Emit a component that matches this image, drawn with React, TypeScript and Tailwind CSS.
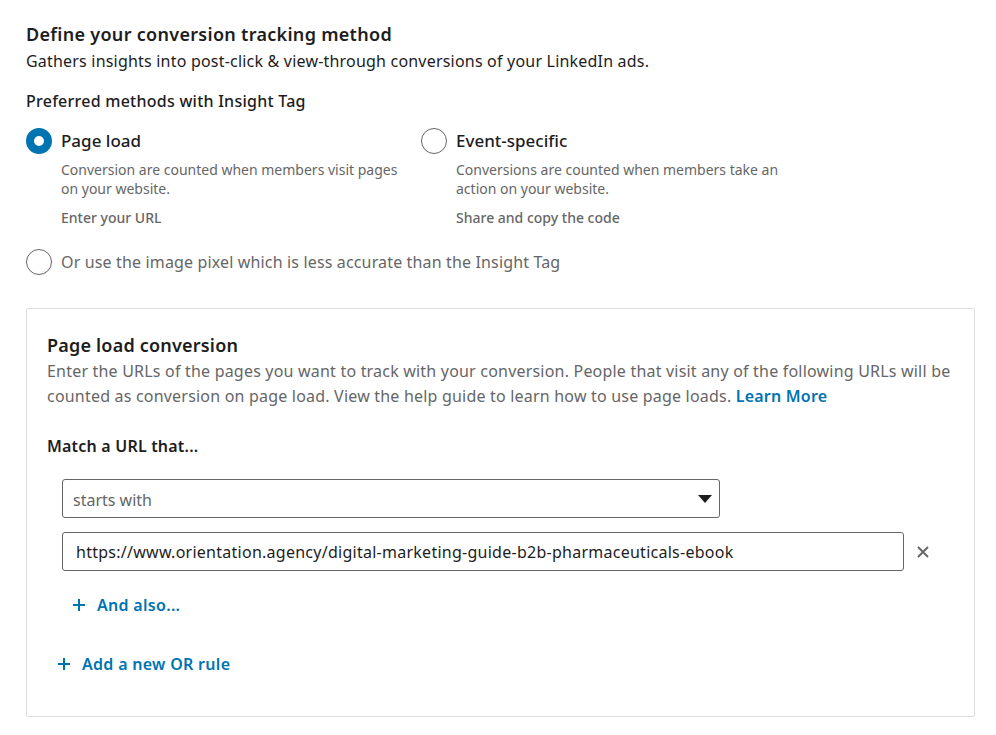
import React from "react";

function Radio({ checked }: { checked?: boolean }) {
  return checked ? (
    <span className="block w-[26px] h-[26px] rounded-full border-[8px] border-[#0073b1] bg-white shrink-0" />
  ) : (
    <span className="block w-[26px] h-[26px] rounded-full border-[1.5px] border-[#666666] bg-white shrink-0" />
  );
}

function Plus() {
  return (
    <svg width="14" height="14" viewBox="0 0 14 14" className="shrink-0">
      <path d="M7 1v12M1 7h12" stroke="#0073b1" strokeWidth="2" />
    </svg>
  );
}

export default function App() {
  return (
    <div
      className="bg-white w-[996px] h-[735px] overflow-hidden text-[rgba(0,0,0,0.9)] pl-[26px] pr-[21px] pt-[22px]"
      style={{ fontFamily: '"Noto Sans", "Open Sans", sans-serif' }}
    >
      <h1 className="text-[18px] leading-[24px] font-semibold text-[#1d1d1d] tracking-[0.3px]">Define your conversion tracking method</h1>
      <p className="text-[16px] leading-[22px] text-[#1d1d1d] mt-[4px] tracking-[0.2px]">
        Gathers insights into post-click &amp; view-through conversions of your LinkedIn ads.
      </p>
      <h2 className="text-[16px] leading-[22px] font-medium text-[#1d1d1d] mt-[18px] tracking-[0.25px]">Preferred methods with Insight Tag</h2>

      <div className="flex mt-[16px]">
        <div className="w-[395px] flex gap-[9px]">
          <Radio checked />
          <div>
            <div className="text-[17px] leading-[26px] font-medium text-[#1d1d1d]">Page load</div>
            <p className="text-[14px] leading-[19px] text-[#666666] mt-[6px] w-[345px]">
              Conversion are counted when members visit pages on your website.
            </p>
            <div className="text-[14px] leading-[20px] font-medium text-[#666666] mt-[10px]">Enter your URL</div>
          </div>
        </div>
        <div className="flex gap-[9px]">
          <Radio />
          <div>
            <div className="text-[17px] leading-[26px] font-medium text-[#1d1d1d]">Event-specific</div>
            <p className="text-[14px] leading-[19px] text-[#666666] mt-[6px] w-[345px]">
              Conversions are counted when members take an action on your website.
            </p>
            <div className="text-[14px] leading-[20px] font-medium text-[#666666] mt-[10px]">Share and copy the code</div>
          </div>
        </div>
      </div>

      <div className="flex items-center gap-[9px] mt-[21px]">
        <Radio />
        <span className="text-[16px] leading-[26px] text-[#666666] tracking-[0.15px]">Or use the image pixel which is less accurate than the Insight Tag</span>
      </div>

      <div className="mt-[33px] border border-[#dddddd] rounded-[2px] h-[409px] pl-[20px] pr-[12px] pt-[23px]">
        <h3 className="text-[18px] leading-[26px] font-semibold text-[#1d1d1d] tracking-[0.2px]">Page load conversion</h3>
        <p className="text-[16px] leading-[25px] text-[#666666] mt-[1px] tracking-[0.2px]">
          Enter the URLs of the pages you want to track with your conversion. People that visit any of the following URLs will be counted as conversion on page load. View the help guide to learn how to use page loads.{" "}
          <span className="font-semibold text-[#0073b1]">Learn More</span>
        </p>
        <div className="text-[16px] leading-[24px] font-semibold text-[#1d1d1d] mt-[25px] tracking-[0.2px]">Match a URL that...</div>

        <div className="pl-[15px] mt-[21px]">
          <div className="w-[658px] h-[39px] border border-[#666666] rounded-[3px] flex items-center justify-between pl-[10px] pr-[7px] pt-[3px]">
            <span className="text-[16px] text-[#666666]">starts with</span>
            <svg width="14" height="8" viewBox="0 0 14 8" className="-mt-[3px]">
              <path d="M0 0h14L7 8z" fill="#1d1d1d" />
            </svg>
          </div>
          <div className="flex items-center mt-[14px]">
            <div className="w-[842px] h-[39px] border border-[#666666] rounded-[3px] flex items-center pl-[13px]">
              <span className="text-[16px] text-[#1d1d1d] tracking-[0.26px]">https://www.orientation.agency/digital-marketing-guide-b2b-pharmaceuticals-ebook</span>
            </div>
            <svg width="12" height="12" viewBox="0 0 12 12" className="ml-[13px]">
              <path d="M1 1l10 10M11 1L1 11" stroke="#666666" strokeWidth="2" />
            </svg>
          </div>
          <div className="flex items-center gap-[11px] mt-[22px] pl-[10px] text-[#0073b1]">
            <Plus />
            <span className="text-[16px] leading-[24px] font-semibold tracking-[0.3px]">And also...</span>
          </div>
        </div>

        <div className="flex items-center gap-[11px] mt-[35px] pl-[10px] text-[#0073b1]">
          <Plus />
          <span className="text-[16px] leading-[24px] font-semibold tracking-[0.3px]">Add a new OR rule</span>
        </div>
      </div>
    </div>
  );
}
